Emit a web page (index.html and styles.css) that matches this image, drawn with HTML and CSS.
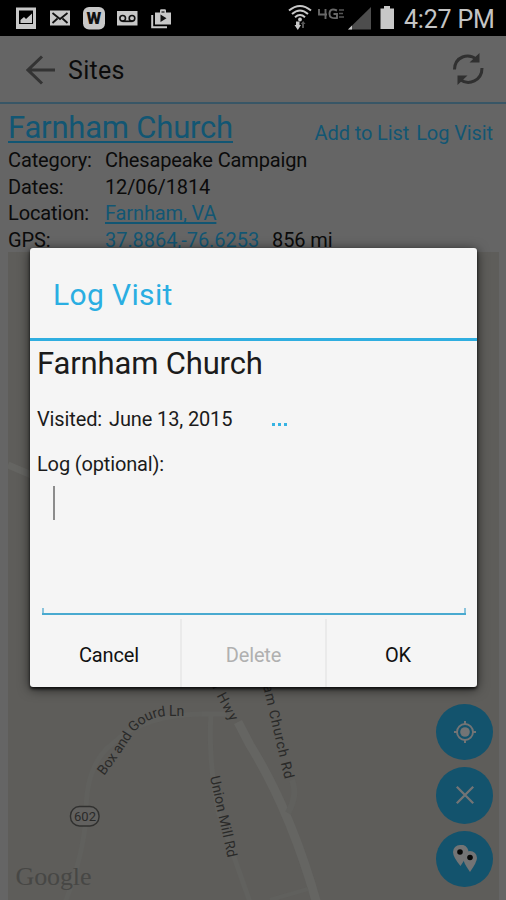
FILE: index.html
```html
<!DOCTYPE html>
<html lang="en">
<head>
<meta charset="utf-8">
<title>Log Visit</title>
<link rel="stylesheet" href="styles.css">
</head>
<body>
<div class="screen">
  <header class="status">
    <svg class="status-icons" width="180" height="36" viewBox="0 0 180 36">
      <path fill="#c8c8c8" fill-rule="evenodd" d="M16 7.500H36V29H16ZM19 10.500V24H33V10.500Z"/>
      <path fill="#c8c8c8" d="M20.500 23V20L24 17L26 19L32 13.500V23Z"/>
      <rect x="50" y="10.500" width="20" height="15" fill="#c8c8c8"/>
      <path d="M52.500 13L60 19L67.500 13M52.500 23L57.500 18.500M67.500 23L62.500 18.500" fill="none" stroke="#111" stroke-width="1.800"/>
      <rect x="83" y="7" width="22" height="22.500" rx="6" fill="#c8c8c8"/>
      <text x="94" y="24" text-anchor="middle" class="badge-letter">W</text>
      <rect x="117" y="11" width="20.500" height="14.500" fill="#c8c8c8"/>
      <path d="M122.500 21.300H132.500" stroke="#111" stroke-width="1.700"/>
      <circle cx="122.700" cy="18.300" r="2.800" fill="none" stroke="#111" stroke-width="1.600"/>
      <circle cx="132" cy="18.300" r="2.800" fill="none" stroke="#111" stroke-width="1.600"/>
      <path d="M152.200 15V27.300H167" fill="none" stroke="#c8c8c8" stroke-width="2"/>
      <path d="M155 12.500H160V10.500Q160 9.300 161.300 9.300H164.700Q166 9.300 166 10.500V12.500H171V24.500H155Z" fill="#c8c8c8"/>
      <path d="M161.500 12H164.500" stroke="#222" stroke-width="1.300"/>
      <path d="M160.500 14.500L166.500 18.200L160.500 22Z" fill="#111"/>
    </svg>
    <div class="status-right">
      <svg width="112" height="36" viewBox="286 0 112 36">
        <g fill="none" stroke="#c8c8c8" stroke-width="2">
          <path d="M289 10.500Q300 1.500 311 10.500M292 14Q300 7 308 14M295 17.200Q300 12.800 305 17.200"/>
        </g>
        <circle cx="300" cy="19.500" r="1.900" fill="#c8c8c8"/>
        <path d="M296 21.500H299.500V25H301L297.800 30L294.500 25H296Z" fill="#c8c8c8"/>
        <path d="M302 28V24H300.800L303.200 21L305.500 24H304V28Z" fill="#555"/>
        <path d="M319 9V14.500H327M325.500 9V19M337 10.500Q329.500 7.500 329.500 14Q329.500 19 337 18V14H333.500" fill="none" stroke="#686868" stroke-width="1.900"/>
        <path d="M339 10H344M339 13.500H343M339 17H344" stroke="#555" stroke-width="1.500"/>
        <path d="M371 7V29.500H348Z" fill="#4d4d4d"/>
        <path d="M352 25.500V29.500H348Z" fill="#c8c8c8"/>
        <path d="M380.500 8.500H384V6H390V8.500H394V29H380.500Z" fill="#c8c8c8"/>
      </svg>
      <span class="clock">4:27 PM</span>
    </div>
  </header>

  <nav class="bar">
    <svg class="back" width="30" height="30" viewBox="0 0 30 30"><path d="M29 15H2M16 1.500L2 15L16 28.500" fill="none" stroke="#333" stroke-width="3"/></svg>
    <h1>Sites</h1>
    <svg class="refresh" width="34" height="34" viewBox="0 0 34 34">
      <g fill="none" stroke="#303030" stroke-width="3"><path d="M3.500 16.500C4 3.500 17 -0.500 26 6.500M31 15C31 27.500 18 33 9 26.500"/></g>
      <path d="M28.500 0V9.500H18.500ZM6.500 32V22.500H16.500Z" fill="#303030"/>
    </svg>
  </nav>

  <section class="details">
    <div class="head"><a class="name">Farnham Church</a><div class="actions"><a>Add to List</a><a>Log Visit</a></div></div>
    <dl>
      <dt>Category:</dt><dd>Chesapeake Campaign</dd>
      <dt>Dates:</dt><dd class="dates">12/06/1814</dd>
      <dt>Location:</dt><dd><a class="place">Farnham, VA</a></dd>
      <dt>GPS:</dt><dd class="gps"><a>37.8864,-76.6253</a><span>856 mi</span></dd>
    </dl>
  </section>

  <main class="map">
    <svg class="roads" width="491" height="648" viewBox="8 252 491 648">
      <g fill="none" stroke="#656562">
        <path d="M8 465L34 476" stroke-width="7"/>
        <path d="M238 722L250 745Q292 813 318 908" stroke-width="9"/>
        <path d="M63 908Q83 858 86 817Q85 765 112 744Q145 713 209 714" stroke="#60605d" stroke-width="5"/>
        <path d="M202 714H226M211 714Q208 758 218 811L252 908" stroke="#61615e" stroke-width="5"/>
        <path d="M292 780Q298 795 288 813" stroke="#60605d" stroke-width="6"/>
        <path d="M270 900L308 889" stroke="#60605d" stroke-width="4"/>
      </g>
      <defs>
        <path id="gourd" d="M104 776Q120 755 133 734Q147 716 168 716L192 716"/>
        <path id="hwy" d="M210 683L241 742"/>
        <path id="union" d="M210 777L229 864"/>
        <path id="farnham" d="M263 686L286 785"/>
      </defs>
      <g class="road-name">
        <text><textPath href="#gourd" textLength="108">Box and Gourd Ln</textPath></text>
        <text><textPath href="#hwy" textLength="44">d Hwy</textPath></text>
        <text><textPath href="#union" textLength="83">Union Mill Rd</textPath></text>
        <text><textPath href="#farnham" textLength="96">am Church Rd</textPath></text>
      </g>
      <rect x="70.500" y="806.500" width="28.500" height="19.500" rx="9" fill="#62615f" stroke="#30302f" stroke-width="1.400"/>
      <text x="85" y="821" text-anchor="middle" class="route">602</text>
      <text x="15.500" y="885" textLength="76" class="brand">Google</text>
    </svg>
    <div class="fabs">
      <span class="fab"><svg width="24" height="24" viewBox="0 0 24 24"><circle cx="12" cy="12" r="4.800" fill="#737475"/><circle cx="12" cy="12" r="8" fill="none" stroke="#737475" stroke-width="1.900"/><path d="M12 1V5M12 19V23M1 12H5M19 12H23" stroke="#737475" stroke-width="2"/></svg></span>
      <span class="fab"><svg width="24" height="24" viewBox="0 0 24 24"><path d="M3.800 3.800L20.200 20.200M20.200 3.800L3.800 20.200" stroke="#737475" stroke-width="2.300"/></svg></span>
      <span class="fab"><svg width="26" height="28" viewBox="0 0 26 28"><path d="M8 0A7 7 0 0 0 1 7Q1 12 8.500 21L15 11A7 7 0 0 0 8 0" fill="#737475"/><path d="M18 6A7 7 0 0 0 11 13Q11 17 18 27Q25 17 25 13A7 7 0 0 0 18 6" fill="#737475"/><circle cx="8" cy="7" r="2.800" fill="#080808"/><circle cx="18" cy="12.500" r="2.800" fill="#080808"/></svg></span>
    </div>
  </main>

  <div class="dialog">
    <h2>Log Visit</h2>
    <div class="body">
      <h3>Farnham Church</h3>
      <div class="visited"><span class="v-label">Visited:</span><span class="v-date">June 13, 2015</span><span class="dots"><i></i><i></i><i></i></span></div>
      <div class="log-label">Log (optional):</div>
      <div class="field"><span class="caret"></span></div>
    </div>
    <div class="buttons"><span class="cancel">Cancel</span><span class="delete">Delete</span><span class="ok">OK</span></div>
  </div>
</div>
</body>
</html>
```

FILE: styles.css
```css
* { box-sizing: border-box; }
body { margin: 0; font-family: Roboto, sans-serif; color: #0b0b0b; background: #000; }
h1, h2, h3, dl, dd { margin: 0; font-weight: 400; }
svg { display: block; flex: none; }
.screen { position: relative; width: 506px; height: 900px; overflow: hidden; display: flex; flex-direction: column; background: #656565; }
.status { height: 36px; flex: none; background: #000; display: flex; justify-content: space-between; }
.badge-letter { font: 900 17px Roboto, sans-serif; fill: #111; }
.status-right { display: flex; padding-right: 12px; }
.clock { width: 90px; margin-left: 6px; font-size: 25px; letter-spacing: -.2px; line-height: 39px; color: #c4c4c4; white-space: nowrap; }
.bar { height: 68px; flex: none; display: flex; align-items: center; padding: 0 21px 0 26px; border-bottom: 2px solid #385666; }
.bar h1 { font-size: 25px; letter-spacing: .3px; margin-left: 12px; flex: 1; line-height: 30px; padding-top: 3px; }
.back, .refresh { margin-top: 2px; }
.details { height: 148px; flex: none; padding: 6px 13px 0 8px; }
.head { display: flex; justify-content: space-between; height: 37px; }
.details a { color: #125673; white-space: nowrap; }
.name { font-size: 31px; letter-spacing: -.2px; line-height: 35px; text-decoration: underline; text-decoration-thickness: 1.500px; text-underline-offset: 3px; }
.actions { display: flex; gap: 7px; font-size: 20px; letter-spacing: -.1px; line-height: 46px; }
dl { display: grid; grid-template-columns: 97px 1fr; grid-auto-rows: 26.700px; font-size: 20px; letter-spacing: -.13px; line-height: 27px; white-space: nowrap; }
.place, .gps a { text-decoration: underline; text-decoration-thickness: 1.500px; text-underline-offset: 2px; }
.gps a { letter-spacing: -.05px; }
.gps { display: flex; gap: 13px; }
.map { position: relative; flex: 1; width: 491px; margin-left: 8px; background: #5e5d5a; }
.road-name { font: 14px Roboto, sans-serif; fill: #2a2a29; }
.route { font: 13px Roboto, sans-serif; fill: #2a2a29; }
.brand { font: 26px "Liberation Serif", serif; fill: #474745; }
.fabs { position: absolute; left: 428px; top: 451.500px; display: flex; flex-direction: column; gap: 7px; }
.fab { width: 57px; height: 56.500px; border-radius: 50%; background: #13536d; display: flex; align-items: center; justify-content: center; }
.dialog { position: absolute; left: 30px; top: 248px; width: 447px; height: 439px; border-radius: 3px; background: #f5f5f5; box-shadow: 0 2px 3px #000b, 0 2px 12px #000a; display: flex; flex-direction: column; color: #1b1b1b; }
.dialog h2 { height: 93px; flex: none; border-bottom: 3px solid #2faee0; color: #2aaee2; font-size: 30px; letter-spacing: .35px; line-height: 94px; padding-left: 23px; }
.body { flex: 1; padding: 0 11px 0 7px; white-space: nowrap; }
.body h3 { font-size: 31px; letter-spacing: -.15px; line-height: 45px; height: 62px; }
.visited { display: flex; font-size: 20px; letter-spacing: -.13px; line-height: 32px; height: 45px; }
.v-date { margin-left: 7px; }
.dots { display: flex; gap: 3px; padding: 20px 0 0 40px; }
.dots i { width: 3px; height: 3px; background: #36b3e3; }
.log-label { font-size: 20px; letter-spacing: -.15px; line-height: 32px; height: 37px; }
.field { height: 130px; margin-left: 5px; border-bottom: 2px solid #49aad0; display: flex; padding: 1px 0 0 11px; background: linear-gradient(#8bc4dc,#8bc4dc) left bottom / 2px 5px no-repeat, linear-gradient(#8bc4dc,#8bc4dc) right bottom / 2px 5px no-repeat; }
.caret { width: 2px; height: 34px; background: #8c8c8c; }
.buttons { height: 68px; flex: none; display: grid; grid-template-columns: 150px 145px 152px; grid-template-rows: 68px; font-size: 20px; letter-spacing: -.15px; line-height: 72px; text-align: center; color: #111; }
.buttons span { height: 68px; }
.buttons span + span { border-left: 2px solid #eaeaea; }
.cancel { padding-left: 8px; }
.delete { color: #b0b0b0; }
.buttons .ok { padding-right: 8px; }
```
